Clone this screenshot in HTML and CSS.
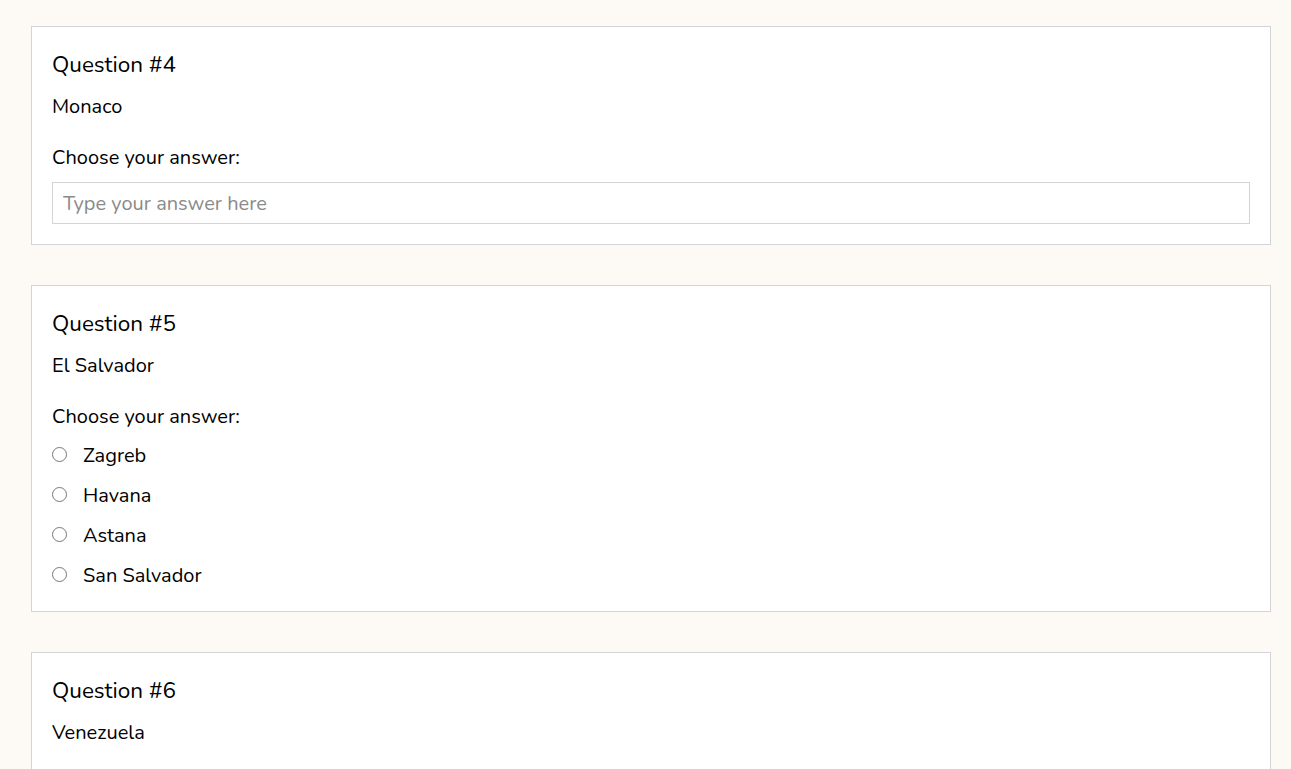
FILE: index.html
```html
<!DOCTYPE html>
<html lang="en">
<head>
<meta charset="utf-8">
<title>Quiz</title>
<link rel="stylesheet" href="styles.css">
</head>
<body>
<main class="quiz">
  <section class="card">
    <h2 class="q-title">Question #4</h2>
    <p class="q-text">Monaco</p>
    <p class="q-label">Choose your answer:</p>
    <input class="q-input" type="text" placeholder="Type your answer here">
  </section>

  <section class="card">
    <h2 class="q-title">Question #5</h2>
    <p class="q-text">El Salvador</p>
    <p class="q-label">Choose your answer:</p>
    <div class="options">
      <label class="option"><input type="radio" name="q5"><span>Zagreb</span></label>
      <label class="option"><input type="radio" name="q5"><span>Havana</span></label>
      <label class="option"><input type="radio" name="q5"><span>Astana</span></label>
      <label class="option"><input type="radio" name="q5"><span>San Salvador</span></label>
    </div>
  </section>

  <section class="card">
    <h2 class="q-title">Question #6</h2>
    <p class="q-text">Venezuela</p>
    <p class="q-label">Choose your answer:</p>
    <input class="q-input" type="text" placeholder="Type your answer here">
  </section>
</main>
</body>
</html>
```
FILE: styles.css
```css
html, body {
  margin: 0;
  padding: 0;
  background: #fdf9f4;
}

body {
  font-family: "Nunito", "Lato", "Open Sans", sans-serif;
  color: #000;
}

.quiz {
  display: flex;
  flex-direction: column;
  gap: 40px;
  padding: 26px 20px 40px 31px;
}

.card {
  background: #fff;
  border: 1px solid #d3d4d8;
  padding: 20px;
  display: flex;
  flex-direction: column;
}

.q-title {
  margin: 0;
  font-size: 22.5px;
  font-weight: 400;
  line-height: 36px;
}

.q-text {
  margin: 10px 0 0;
  font-size: 20px;
  line-height: 27px;
}

.q-label {
  margin: 24px 0 0;
  font-size: 20px;
  line-height: 27px;
}

.q-input {
  margin-top: 11px;
  height: 42px;
  box-sizing: border-box;
  border: 1px solid #d3d4d8;
  padding: 0 10px;
  font-family: inherit;
  font-size: 20px;
  color: #000;
  background: #fff;
  outline: none;
}

.q-input::placeholder {
  color: #8a8a8a;
}

.options {
  margin-top: 9px;
  display: flex;
  flex-direction: column;
  gap: 8px;
}

.option {
  display: flex;
  align-items: center;
  gap: 16px;
  height: 32px;
  font-size: 20px;
  line-height: 27px;
}

.option input {
  margin: 0;
  width: 15px;
  height: 15px;
  position: relative;
  top: -1px;
}
```
